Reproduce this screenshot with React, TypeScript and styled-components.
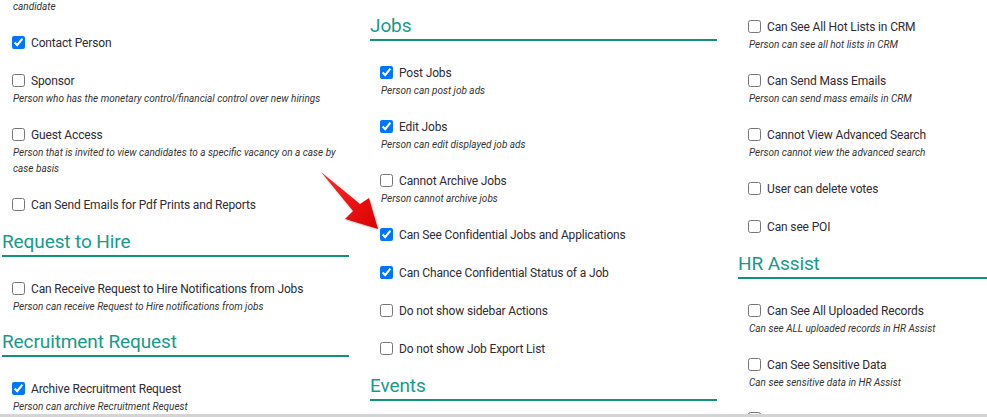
import styled, { createGlobalStyle } from "styled-components";

const GlobalStyle = createGlobalStyle`
	html, body {
		margin: 0;
		padding: 0;
		background: #ffffff;
	}
	body {
		font-family: Roboto, "Liberation Sans", Arial, sans-serif;
		color: #333333;
	}
`;

const Page = styled.div`
	height: 417px;
	width: 987px;
	display: flex;
	flex-direction: column;
	overflow: hidden;
	background: #ffffff;
`;

const Board = styled.div`
	flex: 1;
	position: relative;
	overflow: hidden;
`;

const Columns = styled.div`
	display: grid;
	grid-template-columns: repeat(3, 347px);
	column-gap: 21px;
	padding-left: 2px;
	align-items: start;
`;

const Column = styled.div<{ $top: number }>`
	display: flex;
	flex-direction: column;
	padding-top: ${({ $top }) => $top}px;
`;

const Heading = styled.h3`
	margin: 0 0 21px;
	font-size: 19px;
	line-height: 20px;
	letter-spacing: -0.1px;
	font-weight: 400;
	color: #179a8b;
	padding-bottom: 3px;
	border-bottom: 2px solid #0f9283;
`;

const Item = styled.div`
	display: flex;
	flex-direction: column;
	padding-left: 10px;
	margin-bottom: 17px;
`;

const CheckRow = styled.label`
	display: flex;
	align-items: center;
	height: 21px;
	gap: 6px;
	font-size: 12px;
	letter-spacing: -0.15px;
	color: #2f2a33;
`;

const Box = styled.input`
	width: 13px;
	height: 13px;
	margin: 0;
	flex: none;
`;

const Desc = styled.div<{ $shift?: number }>`
	font-size: 10px;
	line-height: 16px;
	font-style: italic;
	color: #333333;
	padding-left: 1px;
	margin-top: ${({ $shift }) => $shift ?? 0}px;
`;

const Arrow = styled.svg`
	position: absolute;
	left: 314px;
	top: 166px;
	filter: drop-shadow(1px 1px 1px rgba(0, 0, 0, 0.25));
`;

const Strip = styled.div`
	height: 3px;
	background: #d4d4d4;
`;

type Entry =
	| { kind: "heading"; text: string }
	| { kind: "item"; label: string; desc?: string; checked?: boolean }
	| { kind: "tail"; text: string };

const left: Entry[] = [
	{ kind: "tail", text: "candidate" },
	{ kind: "item", label: "Contact Person", checked: true },
	{ kind: "item", label: "Sponsor", desc: "Person who has the monetary control/financial control over new hirings" },
	{
		kind: "item",
		label: "Guest Access",
		desc: "Person that is invited to view candidates to a specific vacancy on a case by case basis",
	},
	{ kind: "item", label: "Can Send Emails for Pdf Prints and Reports" },
	{ kind: "heading", text: "Request to Hire" },
	{
		kind: "item",
		label: "Can Receive Request to Hire Notifications from Jobs",
		desc: "Person can receive Request to Hire notifications from jobs",
	},
	{ kind: "heading", text: "Recruitment Request" },
	{ kind: "item", label: "Archive Recruitment Request", desc: "Person can archive Recruitment Request", checked: true },
];

const middle: Entry[] = [
	{ kind: "heading", text: "Jobs" },
	{ kind: "item", label: "Post Jobs", desc: "Person can post job ads", checked: true },
	{ kind: "item", label: "Edit Jobs", desc: "Person can edit displayed job ads", checked: true },
	{ kind: "item", label: "Cannot Archive Jobs", desc: "Person cannot archive jobs" },
	{ kind: "item", label: "Can See Confidential Jobs and Applications", checked: true },
	{ kind: "item", label: "Can Chance Confidential Status of a Job", checked: true },
	{ kind: "item", label: "Do not show sidebar Actions" },
	{ kind: "item", label: "Do not show Job Export List" },
	{ kind: "heading", text: "Events" },
];

const right: Entry[] = [
	{ kind: "item", label: "Can See All Hot Lists in CRM", desc: "Person can see all hot lists in CRM" },
	{ kind: "item", label: "Can Send Mass Emails", desc: "Person can send mass emails in CRM" },
	{ kind: "item", label: "Cannot View Advanced Search", desc: "Person cannot view the advanced search" },
	{ kind: "item", label: "User can delete votes" },
	{ kind: "item", label: "Can see POI" },
	{ kind: "heading", text: "HR Assist" },
	{ kind: "item", label: "Can See All Uploaded Records", desc: "Can see ALL uploaded records in HR Assist" },
	{ kind: "item", label: "Can See Sensitive Data", desc: "Can see sensitive data in HR Assist" },
	{ kind: "item", label: "" },
];

function renderEntry(entry: Entry, index: number) {
	if (entry.kind === "heading") {
		return <Heading key={index}>{entry.text}</Heading>;
	}
	if (entry.kind === "tail") {
		return (
			<Item key={index}>
				<Desc $shift={-1}>{entry.text}</Desc>
			</Item>
		);
	}
	return (
		<Item key={index}>
			<CheckRow>
				<Box type="checkbox" defaultChecked={entry.checked} />
				{entry.label && <span>{entry.label}</span>}
			</CheckRow>
			{entry.desc && <Desc>{entry.desc}</Desc>}
		</Item>
	);
}

export default function App() {
	return (
		<>
			<GlobalStyle />
			<Page>
				<Board>
					<Columns>
						<Column $top={0}>{left.map(renderEntry)}</Column>
						<Column $top={16}>{middle.map(renderEntry)}</Column>
						<Column $top={16}>{right.map(renderEntry)}</Column>
					</Columns>
					{/* red pointer annotation */}
					<Arrow width="72" height="70" viewBox="314 166 72 70">
						<defs>
							<linearGradient id="arrowFill" x1="0" y1="0" x2="1" y2="1">
								<stop offset="0" stopColor="#ff2a2a" />
								<stop offset="1" stopColor="#d90000" />
							</linearGradient>
						</defs>
						<polygon
							points="321,172 360,204 369,198 378,229 345,219 353,211"
							fill="url(#arrowFill)"
						/>
					</Arrow>
				</Board>
				<Strip />
			</Page>
		</>
	);
}
